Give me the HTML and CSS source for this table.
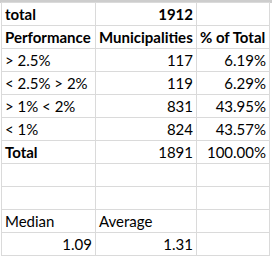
FILE: index.html
```html
<!DOCTYPE html>
<html>
<head>
<meta charset="utf-8">
<link rel="stylesheet" href="styles.css">
</head>
<body>
<div class="colhead"></div>
<table class="sheet">
  <colgroup><col class="ca"><col class="cb"><col class="cc"></colgroup>
  <tr><td class="b">total</td><td class="b r">1912</td><td></td></tr>
  <tr><td class="b">Performance</td><td class="b">Municipalities</td><td class="b">% of Total</td></tr>
  <tr><td>&gt; 2.5%</td><td class="r">117</td><td class="r">6.19%</td></tr>
  <tr><td>&lt; 2.5% &gt; 2%</td><td class="r">119</td><td class="r">6.29%</td></tr>
  <tr><td>&gt; 1% &lt; 2%</td><td class="r">831</td><td class="r">43.95%</td></tr>
  <tr><td>&lt; 1%</td><td class="r">824</td><td class="r">43.57%</td></tr>
  <tr><td class="b">Total</td><td class="r">1891</td><td class="r">100.00%</td></tr>
  <tr><td></td><td></td><td></td></tr>
  <tr><td></td><td></td><td></td></tr>
  <tr><td>Median</td><td>Average</td><td></td></tr>
  <tr><td class="r">1.09</td><td class="r">1.31</td><td></td></tr>
</table>
</body>
</html>
```
FILE: styles.css
```css
html, body {
  margin: 0;
  padding: 0;
  background: #ffffff;
}
body {
  width: 272px;
  height: 258px;
  overflow: hidden;
  font-family: Lato, "Liberation Sans", sans-serif;
  font-size: 15px;
  color: #000;
}
.colhead {
  height: 3px;
  background: #cdcdcd;
}
.sheet {
  border-collapse: collapse;
  table-layout: fixed;
  width: 268px;
  margin-left: 1px;
  margin-top: -1px;
}
.ca { width: 94px; }
.cb { width: 101px; }
.cc { width: 73px; }
.sheet td {
  border: 1px solid #dadada;
  height: 22px;
  padding: 0 3px;
  line-height: 22px;
  white-space: nowrap;
  overflow: hidden;
  vertical-align: bottom;
}
.sheet td.b { font-weight: 700; }
.sheet td.r { text-align: right; }
```
